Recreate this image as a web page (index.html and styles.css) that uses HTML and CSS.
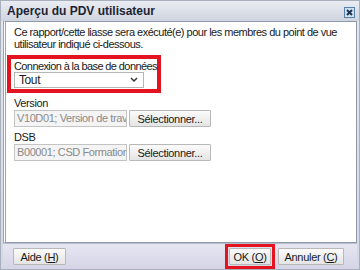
FILE: index.html
```html
<!DOCTYPE html>
<html lang="fr">
<head>
    <meta charset="UTF-8">
    <title>Aperçu du PDV utilisateur</title>
    <link rel="stylesheet" href="styles.css">
</head>
<body>

    <div class="window">
        <div class="titlebar">
            <span class="title">Aperçu du PDV utilisateur</span>
            <span class="close">
                <svg width="11" height="11" viewBox="0 0 11 11">
                    <rect x="0.5" y="0.5" width="10" height="10" fill="#cfe0f0" stroke="#5a7fa8"/>
                    <path d="M3 3 L8 8 M8 3 L3 8" stroke="#1e3550" stroke-width="2"/>
                </svg>
            </span>
        </div>

        <div class="content">
            <p class="intro">Ce rapport/cette liasse sera exécuté(e) pour les membres du point de vue utilisateur indiqué ci-dessous.</p>

            <div class="highlight">
                <div class="label">Connexion à la base de données</div>
                <div class="select">
                    <span>Tout</span>
                    <svg width="8" height="6" viewBox="0 0 8 6">
                        <path d="M1 1 L4 4 L7 1" fill="none" stroke="#333" stroke-width="1.5"/>
                    </svg>
                </div>
            </div>

            <div class="field">
                <div class="label">Version</div>
                <div class="row">
                    <div class="input">V10D01; Version de travail</div>
                    <button class="btn">Sélectionner...</button>
                </div>
            </div>

            <div class="field">
                <div class="label">DSB</div>
                <div class="row">
                    <div class="input">B00001; CSD Formation 1</div>
                    <button class="btn">Sélectionner...</button>
                </div>
            </div>
        </div>

        <div class="footer">
            <button class="btn help">Aide (<u>H</u>)</button>
            <span class="spacer"></span>
            <span class="mark"><button class="btn ok">OK (<u>O</u>)</button></span>
            <button class="btn cancel">Annuler (<u>C</u>)</button>
        </div>
    </div>

</body>
</html>
```

FILE: styles.css
```css
body {
    margin: 0;
    font-family: "Liberation Sans", Arial, sans-serif;
    font-size: 11px;
    letter-spacing: -0.4px;
    color: #1a1a1a;
    background-color: #ffffff;
}
.window {
    width: 358px;
    height: 268px;
    border: 1px solid #a9b0bd;
    background: linear-gradient(#e4e7ee, #d3d8e3);
    display: flex;
    flex-direction: column;
}
.titlebar {
    height: 20px;
    display: flex;
    align-items: center;
    justify-content: space-between;
    padding: 0 4px 0 6px;
    background: linear-gradient(#e9ecf2, #cfd4df);
}
.title {
    font-weight: bold;
    font-size: 12px;
    letter-spacing: 0;
    color: #1c2433;
}
.close {
    display: flex;
    margin-top: 2px;
}
.content {
    flex: 1;
    margin: 0 2px;
    padding: 4px 0 0 8px;
    background-color: #ffffff;
    border: 1px solid #8e99ab;
    border-left: 3px double #9aa3b3;
}
.intro {
    margin: 0;
    line-height: 12px;
    letter-spacing: -0.5px;
}
.highlight {
    width: 142px;
    margin: 5px 0 0 -7px;
    padding: 1px 1px 1px 3px;
    border: 4px solid #e3141f;
}
.label {
    line-height: 12px;
    white-space: nowrap;
}
.highlight .label {
    letter-spacing: -0.6px;
}
.select {
    height: 14px;
    width: 119px;
    padding: 0 5px 0 4px;
    border: 1px solid #b5b5b5;
    display: flex;
    align-items: center;
    justify-content: space-between;
    font-size: 12px;
}
.field {
    margin-top: 4px;
}
.row {
    display: flex;
    gap: 2px;
    margin-top: 1px;
}
.input {
    width: 109px;
    height: 15px;
    padding-left: 2px;
    border: 1px solid #c3c3c3;
    background-color: #f4f4f4;
    color: #8a8a8a;
    white-space: nowrap;
    overflow: hidden;
    line-height: 15px;
}
.btn {
    font-family: "Liberation Sans", Arial, sans-serif;
    font-size: 11px;
    letter-spacing: -0.3px;
    color: #1a1a1a;
    height: 17px;
    padding: 0;
    white-space: nowrap;
    border: 1px solid #b8b8b8;
    border-radius: 1px;
    background: linear-gradient(#fbfbfb, #e4e4e4);
}
.row .btn {
    width: 82px;
}
.footer {
    height: 25px;
    display: flex;
    align-items: center;
    padding: 0 13px 0 10px;
    background: linear-gradient(#e6e6f2, #d4d4e6);
    border-top: 1px solid #b8bccb;
    margin: 0 2px;
}
.spacer {
    flex: 1;
}
.help {
    width: 53px;
}
.mark {
    display: flex;
    padding: 1px 1px;
    border: 3px solid #e3141f;
    margin-right: 3px;
}
.ok {
    width: 42px;
}
.cancel {
    width: 66px;
}
```
